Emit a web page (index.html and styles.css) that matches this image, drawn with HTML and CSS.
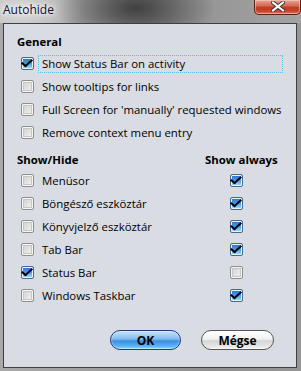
FILE: index.html
```html
<!DOCTYPE html>
<html>
<head>
<meta charset="utf-8">
<link rel="stylesheet" href="styles.css">
</head>
<body>
<div class="window">
  <div class="titlebar">
    <span class="title">Autohide</span>
    <div class="close">
      <svg width="14" height="11" viewBox="0 0 14 11"><path d="M2 1.5 L12 9.5 M12 1.5 L2 9.5" stroke="#3a3a3a" stroke-width="4" stroke-linecap="square"/><path d="M2 1.5 L12 9.5 M12 1.5 L2 9.5" stroke="#fff" stroke-width="2" stroke-linecap="square"/></svg>
    </div>
  </div>
  <div class="client">
    <div class="heading">General</div>
    <div class="row"><span class="cb on"></span><span class="label focus">Show Status Bar on activity</span></div>
    <div class="row"><span class="cb"></span><span class="label">Show tooltips for links</span></div>
    <div class="row"><span class="cb"></span><span class="label">Full Screen for 'manually' requested windows</span></div>
    <div class="row"><span class="cb"></span><span class="label">Remove context menu entry</span></div>

    <div class="grid">
      <div class="heading h2">Show/Hide</div><div class="heading h2">Show always</div>
      <div class="row"><span class="cb"></span><span class="label">Menüsor</span></div><div class="row col2"><span class="cb on"></span></div>
      <div class="row"><span class="cb"></span><span class="label">Böngésző eszköztár</span></div><div class="row col2"><span class="cb on"></span></div>
      <div class="row"><span class="cb"></span><span class="label">Könyvjelző eszköztár</span></div><div class="row col2"><span class="cb on"></span></div>
      <div class="row"><span class="cb"></span><span class="label">Tab Bar</span></div><div class="row col2"><span class="cb on"></span></div>
      <div class="row"><span class="cb on"></span><span class="label">Status Bar</span></div><div class="row col2"><span class="cb"></span></div>
      <div class="row"><span class="cb"></span><span class="label">Windows Taskbar</span></div><div class="row col2"><span class="cb on"></span></div>
    </div>

    <div class="buttons">
      <button class="btn ok">OK</button>
      <button class="btn cancel">Mégse</button>
    </div>
  </div>
</div>
</body>
</html>
```
FILE: styles.css
```css
html, body { margin: 0; padding: 0; }
body { width: 301px; height: 371px; overflow: hidden; font-family: "Open Sans", "DejaVu Sans", sans-serif; }
.window {
  width: 301px; height: 371px; box-sizing: border-box;
  display: flex; flex-direction: column;
  background: linear-gradient(90deg, #a9a9a9 0%, #9c9c9c 40%, #8f8f8f 70%, #969696 100%);
}
.titlebar {
  height: 23px; flex: none; display: flex; align-items: flex-start;
  background:
    radial-gradient(ellipse 80px 40px at 135px 8px, rgba(50,50,50,0.85), rgba(50,50,50,0) 100%),
    radial-gradient(ellipse 60px 30px at 25px 10px, rgba(255,255,255,0.55), rgba(255,255,255,0) 100%),
    linear-gradient(90deg, #b9b9b9 0%, #a5a5a5 25%, #8c8c8c 50%, #999 75%, #a3a3a3 100%);
}
.title {
  margin: 3px 0 0 3px; font-size: 12px; line-height: 14px; color: #101030;
  font-family: "Open Sans", sans-serif;
  text-shadow: 0 0 6px #fff, 0 0 4px #fff;
}
.close {
  margin-left: auto; width: 47px; height: 15px; box-sizing: border-box;
  border: 1px solid #5a2018; border-top: none; border-radius: 0 0 5px 5px;
  background: linear-gradient(#e9a597 0%, #d66b57 40%, #bf3a1f 55%, #c8452a 80%, #e17a5e 100%);
  display: flex; align-items: center; justify-content: center;
  box-shadow: inset 0 0 0 1px rgba(255,220,200,0.5);
}
.close svg { display: block; margin-top: -1px; }
.client {
  flex: 1; margin: 0 4px 3px 3px; border: 1px solid #3f3f3f;
  background: #d9dce3; box-sizing: border-box;
  padding: 10px 0 0 13px; font-size: 11.4px; color: #000;
}
.heading { font-weight: bold; height: 16px; line-height: 16px; margin-bottom: 2px; white-space: nowrap; }
.row { height: 23px; display: flex; align-items: center; padding-left: 4px; }
.cb {
  width: 13px; height: 13px; box-sizing: border-box; flex: none; position: relative;
  border: 1px solid #8f8f8f; border-radius: 2px;
  background: linear-gradient(135deg, #cfcfcf, #f4f4f4);
  box-shadow: inset 0 0 0 1px #f5f5f5, inset 0 0 0 2px #c6c6c6;
}
.cb.on {
  border-color: #4a6a8a;
  background: linear-gradient(#2e6fd0 0%, #4d9bea 50%, #9fe6ff 100%);
  box-shadow: inset 0 0 0 1px #e8f4ff;
}
.cb.on::after {
  content: ""; position: absolute; left: 2px; top: -1px; width: 4px; height: 8px;
  border: solid #000; border-width: 0 2px 2px 0; transform: rotate(40deg) skewX(-8deg);
}
.label { margin-left: 4px; padding: 1px 3px; border: 1px solid transparent; line-height: 14px; white-space: nowrap; }
.label.focus { border: 1px dotted #5bbde8; width: 237px; }
.grid { display: grid; grid-template-columns: 188px 80px; margin-top: 8px; }
.h2 { margin-bottom: 1px; }
.col2 { padding-left: 25px; }
.buttons { display: flex; gap: 20px; justify-content: flex-end; padding-right: 22px; margin-top: 23px; }
.btn {
  height: 20px; border-radius: 10px; font: bold 12px "Open Sans", sans-serif; padding: 0;
  display: flex; align-items: center; justify-content: center; color: #000;
}
.ok {
  width: 71px; border: 1px solid #1d3f77;
  background: linear-gradient(#c9e4fb 0%, #7fbbef 45%, #3d8ee0 55%, #5cb3f5 85%, #9fe0ff 100%);
  box-shadow: inset 0 0 0 1px rgba(255,255,255,0.35);
}
.cancel {
  width: 73px; border: 1px solid #555;
  background: linear-gradient(#ffffff 0%, #f1f1f1 45%, #d6d6d6 55%, #e6e6e6 85%, #fbfbfb 100%);
}
```
